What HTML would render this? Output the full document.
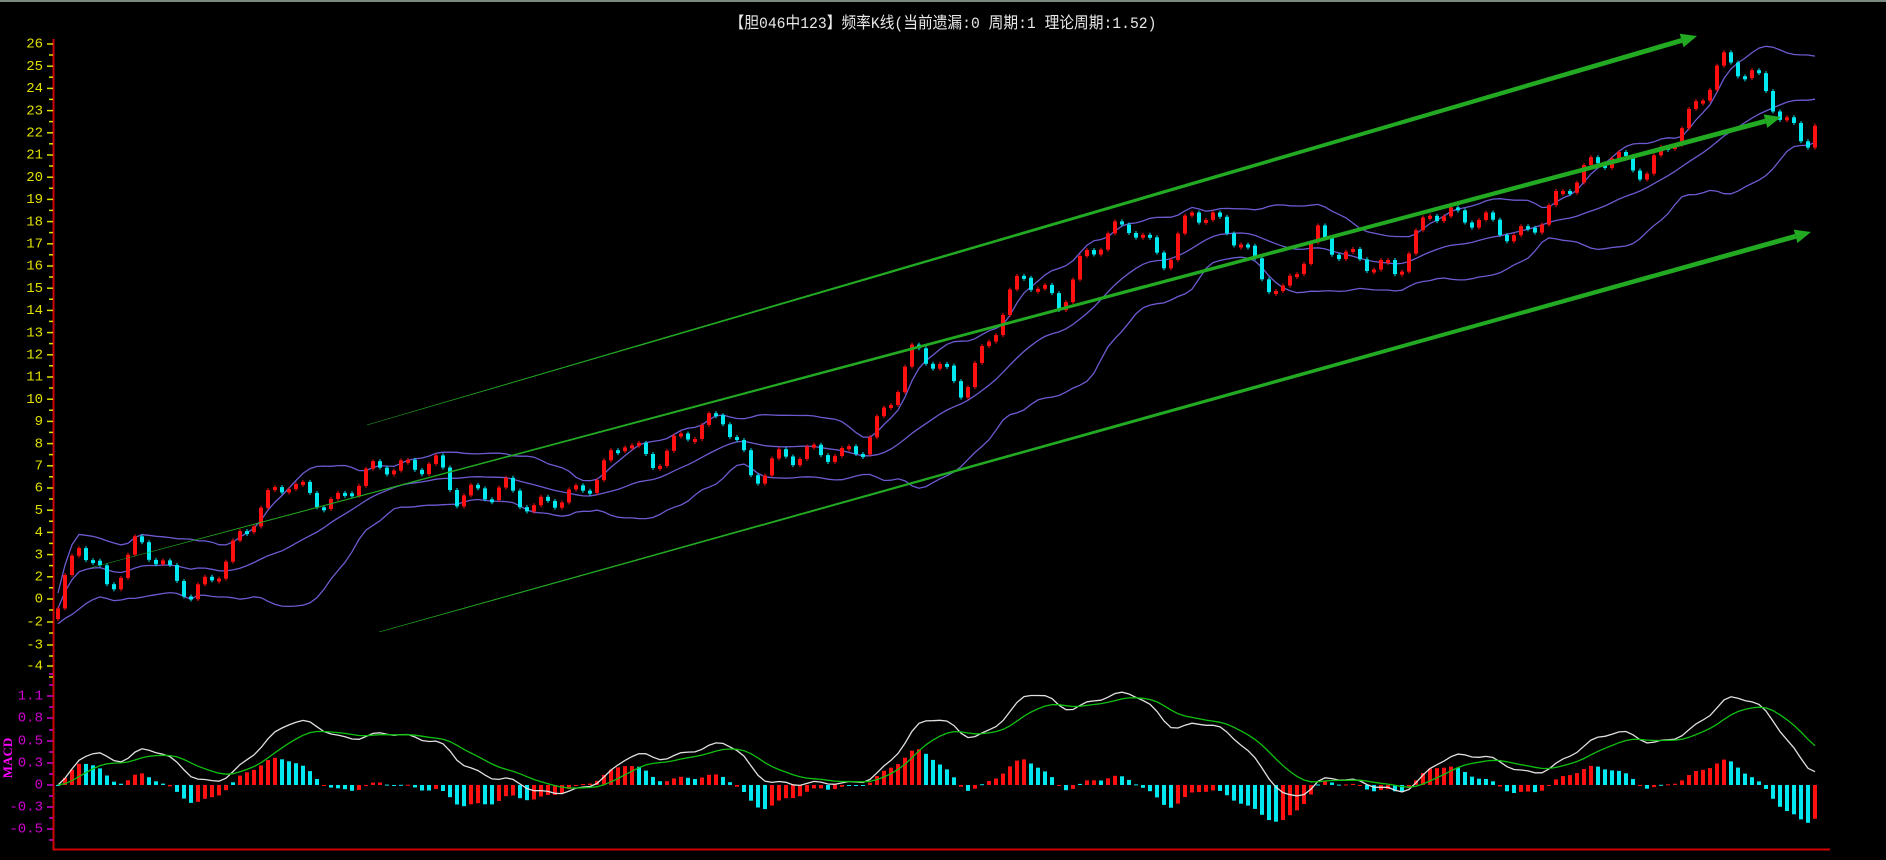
<!DOCTYPE html>
<html><head><meta charset="utf-8">
<style>
html,body{margin:0;padding:0;background:#000;}
body{width:1886px;height:860px;overflow:hidden;position:relative;font-family:"Liberation Mono","Noto Sans CJK SC",monospace;}
#t{position:absolute;top:9px;left:0;width:1886px;text-align:center;color:#e8e8e8;font-size:16px;font-family:"Liberation Mono","Noto Sans CJK SC",monospace;}
#t span{display:inline-block;transform:scaleX(0.92);}
</style></head><body>
<div style="position:absolute;left:0;top:0;width:1886px;height:2px;background:#7b8a80"></div>
<div id="t"><span>【胆046中123】频率K线(当前遗漏:0 周期:1 理论周期:1.52)</span></div>
<svg id="s" width="1886" height="860" style="position:absolute;left:0;top:0"></svg>
<script>
var S=document.getElementById('s'),h='';
function L(x1,y1,x2,y2,c,w){h+='<line x1="'+x1+'" y1="'+y1+'" x2="'+x2+'" y2="'+y2+'" stroke="'+c+'" stroke-width="'+(w||1)+'"/>';}
function T(x,y,s,c,sz){h+='<text x="'+x+'" y="'+y+'" fill="'+c+'" font-size="'+(sz||14)+'" text-anchor="end" dominant-baseline="middle" font-family="Liberation Mono, monospace">'+s+'</text>';}
L(53.5,39,53.5,850,'#d00000',2);L(53,849.5,1830,849.5,'#d00000',2);
var labs=[];for(var v=26;v>=2;v--)labs.push([String(v),44+(26-v)*22.2]);
labs.push(['0',599],['-2',622],['-3',645],['-4',666]);
labs.forEach(function(l){T(43,l[1],l[0],'#e0e000',14);L(47,l[1],53,l[1],'#e0e000',1.5);L(49,l[1]+11,53,l[1]+11,'#e0e000',1.5);});
var ml=[['1.1',696],['0.8',718],['0.5',741],['0.3',763],['0',785],['-0.3',807],['-0.5',829]];
ml.forEach(function(l){T(43,l[1],l[0],'#d000d0',14);L(47,l[1],53,l[1],'#d000d0',1.5);L(49,l[1]-11,53,l[1]-11,'#d000d0',1.5);});
L(49,674,53,674,'#d000d0',1.5);L(49,840,53,840,'#d000d0',1.5);
h+='<text x="12" y="758" fill="#ff00ff" font-size="13" font-weight="bold" text-anchor="middle" transform="rotate(-90 12 758)" font-family="Liberation Serif, serif">MACD</text>';
var k=[[45,-1],[65,2.5],[90,0.5],[115,3],[140,1],[160,0],[200,3],[240,5.5],[280,4.5],[320,6.3],[360,6.5],[380,4.5],[420,5.5],[445,4],[480,5],[520,7.5],[540,6],[570,8],[600,8.5],[625,5.5],[650,7],[700,6.5],[720,7.5],[760,11.5],[800,10],[850,15],[880,14],[900,16],[940,17.5],[970,16],[990,18],[1030,17],[1065,14],[1095,17],[1130,16],[1160,15],[1190,18.5],[1230,17.5],[1260,17],[1300,19],[1340,21],[1370,20],[1400,22],[1430,25.5],[1455,24.5],[1480,22.5],[1500,21.5],[1515,23.5]];
k=k.map(function(p){return [p[0]/0.831,p[1]];});
function ip(x){if(x<=k[0][0])return k[0][1];for(var i=1;i<k.length;i++){if(x<=k[i][0]){var a=k[i-1],b=k[i];return a[1]+(b[1]-a[1])*(x-a[0])/(b[0]-a[0]);}}return k[k.length-1][1];}
function Y(v){return 599-v*21.35;}
var N=252,xs=[],cl=[];
for(var i=0;i<N;i++){var x=58+i*7;xs.push(x);cl.push(ip(x)+0.45*Math.sin(i*1.3)+0.25*Math.sin(i*0.47));}
var up=[],md=[],dn=[];
for(var i=0;i<N;i++){var a=Math.max(0,i-19),s=0,n=0;for(var j=a;j<=i;j++){s+=cl[j];n++;}var m=s/n,q=0;for(var j=a;j<=i;j++)q+=(cl[j]-m)*(cl[j]-m);var sd=Math.sqrt(q/n);sd=Math.max(sd,0.45);md.push(m);up.push(m+1.6*sd);dn.push(m-1.6*sd);}
function pl(arr,c,f){var p='';for(var i=0;i<N;i++)p+=(i?'L':'M')+xs[i].toFixed(1)+' '+f(arr[i]).toFixed(1);h+='<path d="'+p+'" fill="none" stroke="'+c+'" stroke-width="1.3"/>';}
pl(up,'#6a5cd0',Y);pl(md,'#6a5cd0',Y);pl(dn,'#6a5cd0',Y);
for(var i=0;i<N;i++){var o=i?cl[i-1]:cl[0]-0.5,c=cl[i];var y1=Y(Math.max(o,c)),y2=Y(Math.min(o,c));if(y2-y1<3){y2=y1+3;}var col=c>=o?'#ff1010':'#00e8f0';L(xs[i],y1-2,xs[i],y2+2,col,1);h+='<rect x="'+(xs[i]-2)+'" y="'+y1.toFixed(1)+'" width="4" height="'+(y2-y1).toFixed(1)+'" fill="'+col+'"/>';}
function ar(x1,y1,x2,y2,w0,w1){var dx=x2-x1,dy=y2-y1,l=Math.sqrt(dx*dx+dy*dy),ux=dx/l,uy=dy/l,nx=-uy,ny=ux;var bx=x2-ux*16,by=y2-uy*16;
h+='<polygon points="'+[x1+nx*w0/2,y1+ny*w0/2,bx+nx*w1/2,by+ny*w1/2,bx-nx*w1/2,by-ny*w1/2,x1-nx*w0/2,y1-ny*w0/2].map(function(v){return v.toFixed(1)}).join(' ')+'" fill="#22aa22"/>';
h+='<polygon points="'+[x2,y2,bx+nx*7,by+ny*7,bx-nx*7,by-ny*7].map(function(v){return v.toFixed(1)}).join(' ')+'" fill="#22aa22"/>';}
ar(367,425,1697,36,0.5,5);ar(90,568,1781,117,0.5,5);ar(379,632,1811,232,0.6,5);
function ema(a,n){var r=[],al=2/(n+1);for(var i=0;i<a.length;i++)r.push(i?r[i-1]+al*(a[i]-r[i-1]):a[i]);return r;}
var e1=ema(cl,12),e2=ema(cl,26),dif=[],dea;for(var i=0;i<N;i++)dif.push((e1[i]-e2[i])*0.75);dea=ema(dif,9);
function M(v){return 785-v*73;}
for(var i=0;i<N;i++){var hv=(dif[i]-dea[i])*1.3;var col=(i>0&&Math.abs(hv)>=Math.abs((dif[i-1]-dea[i-1])*1.3))?'#ff1010':'#00e8f0';if(hv<0)col=col=='#ff1010'?'#00e8f0':'#ff1010';var ya=M(0),yb=M(hv);h+='<rect x="'+(xs[i]-2)+'" y="'+Math.min(ya,yb).toFixed(1)+'" width="4" height="'+Math.max(1,Math.abs(yb-ya)).toFixed(1)+'" fill="'+col+'"/>';}
pl(dif,'#e0e0e0',M);pl(dea,'#10c010',M);
S.innerHTML=h;
</script>
</body></html>
